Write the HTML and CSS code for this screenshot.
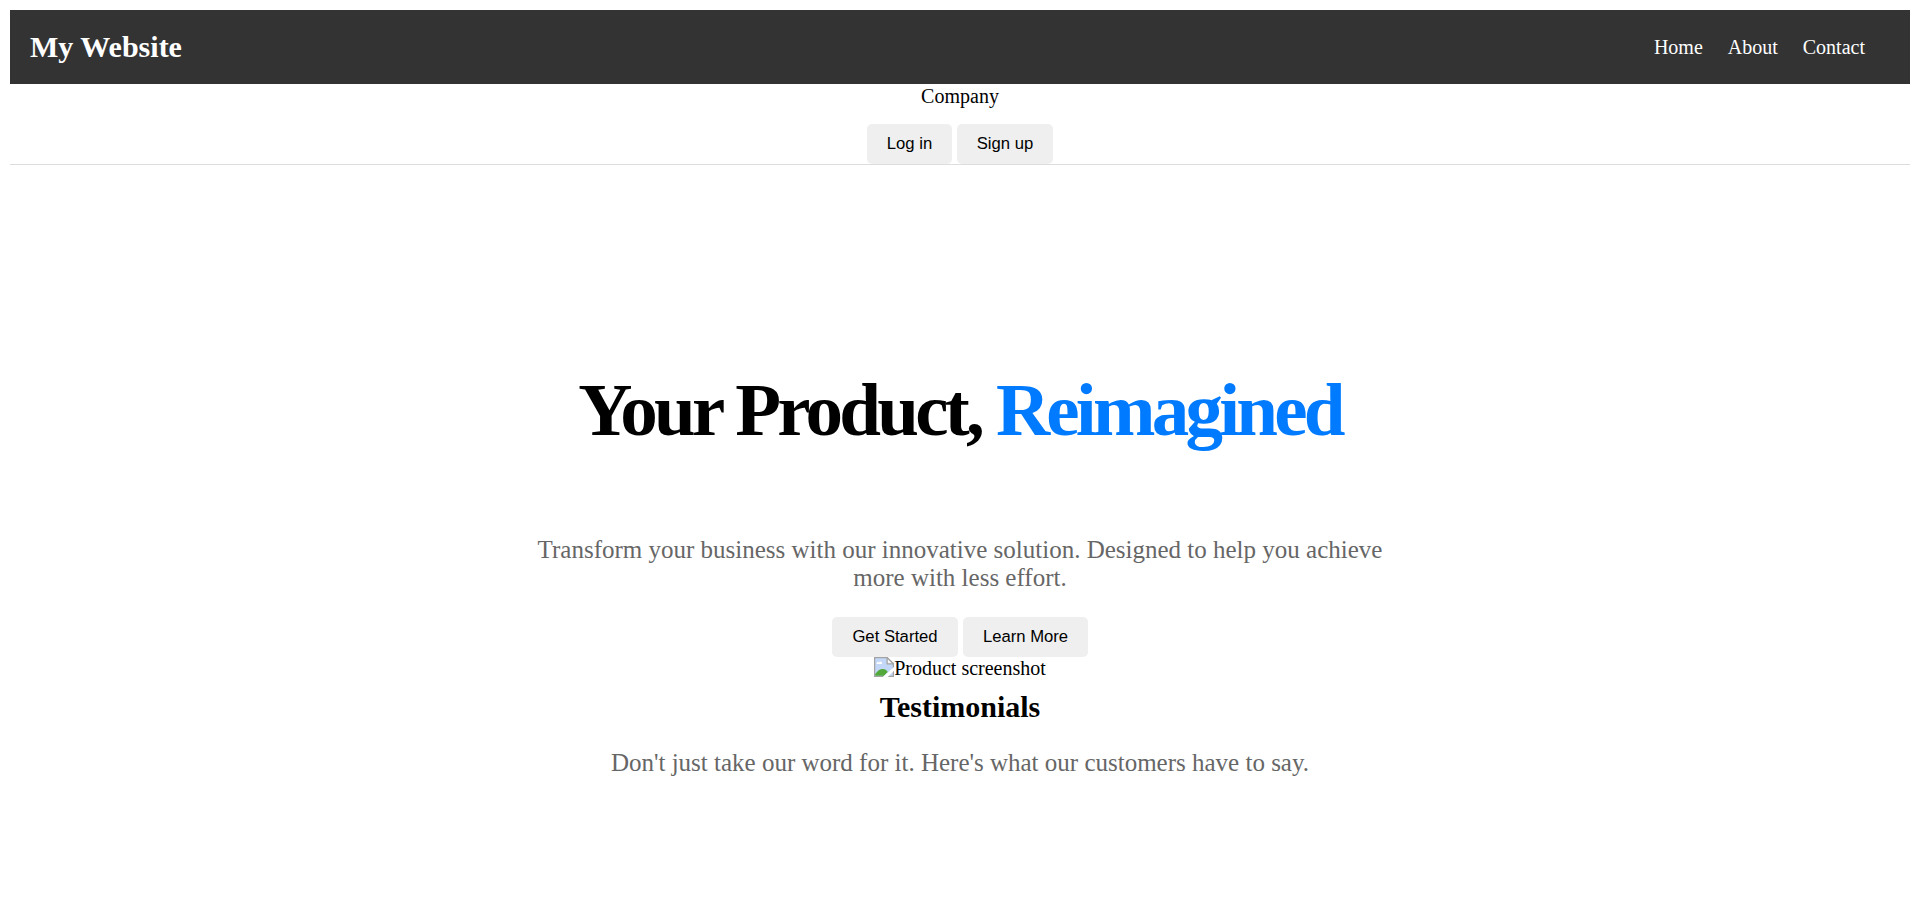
FILE: index.html
```html
<!DOCTYPE html>
<html lang="en">
<head>
<meta charset="utf-8">
<title>My Website</title>
<link rel="stylesheet" href="styles.css">
</head>
<body>
<header class="site-header">
  <h1 class="site-title">My Website</h1>
  <nav class="site-nav"><a>Home</a><a>About</a><a>Contact</a></nav>
</header>
<div class="company-bar">
  <div class="company-name">Company</div>
  <div class="actions"><button class="btn btn-login">Log in</button><button class="btn btn-signup">Sign up</button></div>
</div>
<main class="hero">
  <h2 class="hero-title">Your Product, <span class="accent">Reimagined</span></h2>
  <p class="lead">Transform your business with our innovative solution. Designed to help you achieve more with less effort.</p>
  <div class="actions"><button class="btn btn-start">Get Started</button><button class="btn btn-learn">Learn More</button></div>
  <div class="product-image">
    <svg class="image-icon" viewBox="0 0 16 16" aria-hidden="true">
      <path d="M.5.5h10l5 5v10H.5z" fill="#c3d8f8" stroke="#a3a3a3"/>
      <path d="M2 5.500c0-1.500 1.500-1.800 2-1C4.500 3 6.500 3.500 6.500 5.500z" fill="#fff"/>
      <path d="M1 15v-1.500c2-3 4-4 6-4s3 1 4 2.500L8 15z" fill="#52a838"/>
      <path d="M10.500.5v5h5z" fill="#f4f6f8" stroke="#a3a3a3"/>
      <path d="M7 16l9-8v3L11 16z" fill="#fff"/>
    </svg><span>Product screenshot</span>
  </div>
  <h2 class="section-title">Testimonials</h2>
  <p class="lead testimonial-lead">Don't just take our word for it. Here's what our customers have to say.</p>
</main>
</body>
</html>
```
FILE: styles.css
```css
* { box-sizing: border-box; }
body {
  margin: 10px;
  font: 20px/23px "Liberation Serif", "Times New Roman", serif;
  color: #000;
  background: #fff;
}
h1, h2, p { margin: 0; }
.site-header {
  display: flex;
  justify-content: space-between;
  align-items: center;
  height: 74px;
  padding: 0 45px 0 20px;
  background: #333;
  color: #fff;
}
.site-title { font-size: 30px; line-height: 34px; }
.site-nav { display: flex; gap: 25px; padding-top: 1px; }
.company-bar {
  height: 81px;
  padding-top: 1px;
  border-bottom: 1px solid #ddd;
  text-align: center;
}
.company-name { margin-bottom: 16px; }
.actions { display: flex; justify-content: center; gap: 5px; }
.btn {
  height: 40px;
  padding: 0 0 2px;
  border: 0;
  border-radius: 5px;
  background: #efefef;
  color: #000;
  font: 16.667px/19px "Liberation Sans", Arial, sans-serif;
}
.btn-login { width: 85px; }
.btn-signup { width: 96px; }
.btn-start { width: 126px; }
.btn-learn { width: 125px; }
.hero { padding-top: 202px; text-align: center; }
.hero-title {
  font-size: 75px;
  line-height: 86px;
  letter-spacing: -3.75px;
}
.accent { color: #007bff; }
.lead {
  width: 875px;
  margin: 83px auto 25px;
  font-size: 25px;
  line-height: 28px;
  color: #666;
}
.product-image { display: flex; justify-content: center; height: 23px; }
.image-icon { width: 20px; height: 20px; }
.section-title { margin-top: 10px; font-size: 30px; line-height: 34px; }
.testimonial-lead { margin-top: 25px; }
```
